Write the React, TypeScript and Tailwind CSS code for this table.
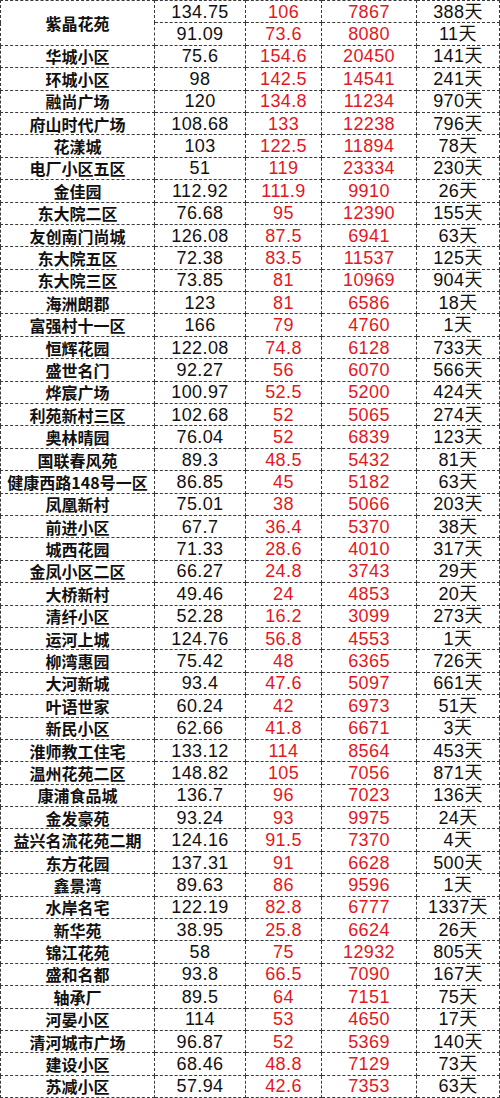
import React from "react";

type Row = [string, string, string, string, string];

const rows: Row[] = [
  ["紫晶花苑", "134.75", "106", "7867", "388天"],
  ["", "91.09", "73.6", "8080", "11天"],
  ["华城小区", "75.6", "154.6", "20450", "141天"],
  ["环城小区", "98", "142.5", "14541", "241天"],
  ["融尚广场", "120", "134.8", "11234", "970天"],
  ["府山时代广场", "108.68", "133", "12238", "796天"],
  ["花漾城", "103", "122.5", "11894", "78天"],
  ["电厂小区五区", "51", "119", "23334", "230天"],
  ["金佳园", "112.92", "111.9", "9910", "26天"],
  ["东大院二区", "76.68", "95", "12390", "155天"],
  ["友创南门尚城", "126.08", "87.5", "6941", "63天"],
  ["东大院五区", "72.38", "83.5", "11537", "125天"],
  ["东大院三区", "73.85", "81", "10969", "904天"],
  ["海洲朗郡", "123", "81", "6586", "18天"],
  ["富强村十一区", "166", "79", "4760", "1天"],
  ["恒辉花园", "122.08", "74.8", "6128", "733天"],
  ["盛世名门", "92.27", "56", "6070", "566天"],
  ["烨宸广场", "100.97", "52.5", "5200", "424天"],
  ["利苑新村三区", "102.68", "52", "5065", "274天"],
  ["奥林晴园", "76.04", "52", "6839", "123天"],
  ["国联春风苑", "89.3", "48.5", "5432", "81天"],
  ["健康西路148号一区", "86.85", "45", "5182", "63天"],
  ["凤凰新村", "75.01", "38", "5066", "203天"],
  ["前进小区", "67.7", "36.4", "5370", "38天"],
  ["城西花园", "71.33", "28.6", "4010", "317天"],
  ["金凤小区二区", "66.27", "24.8", "3743", "29天"],
  ["大桥新村", "49.46", "24", "4853", "20天"],
  ["清纤小区", "52.28", "16.2", "3099", "273天"],
  ["运河上城", "124.76", "56.8", "4553", "1天"],
  ["柳湾惠园", "75.42", "48", "6365", "726天"],
  ["大河新城", "93.4", "47.6", "5097", "661天"],
  ["叶语世家", "60.24", "42", "6973", "51天"],
  ["新民小区", "62.66", "41.8", "6671", "3天"],
  ["淮师教工住宅", "133.12", "114", "8564", "453天"],
  ["温州花苑二区", "148.82", "105", "7056", "871天"],
  ["康浦食品城", "136.7", "96", "7023", "136天"],
  ["金发豪苑", "93.24", "93", "9975", "24天"],
  ["益兴名流花苑二期", "124.16", "91.5", "7370", "4天"],
  ["东方花园", "137.31", "91", "6628", "500天"],
  ["鑫景湾", "89.63", "86", "9596", "1天"],
  ["水岸名宅", "122.19", "82.8", "6777", "1337天"],
  ["新华苑", "38.95", "25.8", "6624", "26天"],
  ["锦江花苑", "58", "75", "12932", "805天"],
  ["盛和名都", "93.8", "66.5", "7090", "167天"],
  ["轴承厂", "89.5", "64", "7151", "75天"],
  ["河晏小区", "114", "53", "4650", "17天"],
  ["清河城市广场", "96.87", "52", "5369", "140天"],
  ["建设小区", "68.46", "48.8", "7129", "73天"],
  ["苏减小区", "57.94", "42.6", "7353", "63天"],
];

const cell =
  "h-[22.4px] p-0 border border-dashed border-[#3a3a3a] text-center align-middle leading-none whitespace-nowrap";
const num = "text-[18px] tracking-[0.4px]";

export default function App() {
  return (
    <div
      className="w-[500px] h-[1098px] bg-white overflow-hidden"
      style={{ fontFamily: '"Liberation Sans", "Noto Sans CJK SC", sans-serif' }}
    >
      <table className="border-collapse table-fixed w-[499px]">
        <colgroup>
          <col className="w-[154px]" />
          <col className="w-[91px]" />
          <col className="w-[76px]" />
          <col className="w-[95px]" />
          <col className="w-[83px]" />
        </colgroup>
        <tbody>
          {rows.map((r, i) => (
            <tr key={i}>
              {i === 0 && (
                <td
                  rowSpan={2}
                  className={`${cell} text-[16px] font-bold text-[#111]`}
                  style={{ fontFamily: '"Noto Sans CJK SC", sans-serif' }}
                >
                  {r[0]}
                </td>
              )}
              {i !== 1 && i !== 0 && (
                <td
                  className={`${cell} text-[16px] font-bold text-[#111]`}
                  style={{ fontFamily: '"Noto Sans CJK SC", sans-serif' }}
                >
                  {r[0]}
                </td>
              )}
              <td className={`${cell} ${num} text-[#111]`}>{r[1]}</td>
              <td className={`${cell} ${num} text-[#e3181e]`}>{r[2]}</td>
              <td className={`${cell} ${num} text-[#e3181e]`}>{r[3]}</td>
              <td className={`${cell} ${num} text-[#111]`}>{r[4]}</td>
            </tr>
          ))}
        </tbody>
      </table>
    </div>
  );
}
